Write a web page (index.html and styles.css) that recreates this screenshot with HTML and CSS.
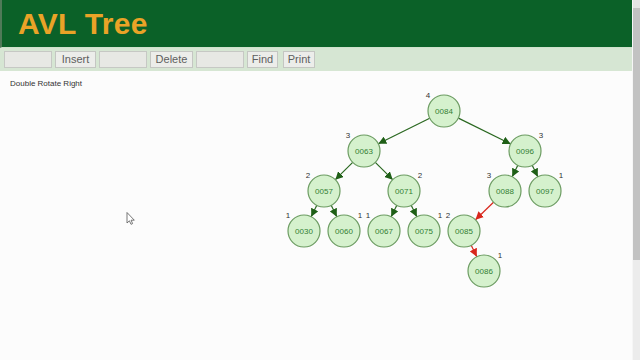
FILE: index.html
```html
<!DOCTYPE html>
<html>
<head>
<meta charset="utf-8">
<title>AVL Tree</title>
<link rel="stylesheet" href="styles.css">
</head>
<body>
<div class="window">
  <div class="page">
    <header class="title-bar"><h1 class="title">AVL Tree</h1></header>
    <div class="toolbar">
      <input class="field" type="text">
      <button class="btn btn-insert">Insert</button>
      <input class="field" type="text">
      <button class="btn btn-delete">Delete</button>
      <input class="field" type="text">
      <button class="btn btn-find">Find</button>
      <button class="btn btn-print">Print</button>
    </div>
    <div class="status">Double Rotate Right</div>
    <svg class="canvas" width="632" height="270" viewBox="0 90 632 270">
      <defs>
        <marker id="ag" markerUnits="userSpaceOnUse" markerWidth="9" markerHeight="8" refX="8" refY="4" orient="auto">
          <path d="M0,0 L8,4 L0,8 z" fill="#1f5f17"/>
        </marker>
        <marker id="ar" markerUnits="userSpaceOnUse" markerWidth="9" markerHeight="8" refX="8" refY="4" orient="auto">
          <path d="M0,0 L8,4 L0,8 z" fill="#d8261c"/>
        </marker>
      </defs>
      <g class="edges">
        <line x1="429.7" y1="118.2" x2="378.3" y2="143.8" marker-end="url(#ag)"/>
        <line x1="458.4" y1="118.1" x2="510.6" y2="143.9" marker-end="url(#ag)"/>
        <line x1="352.7" y1="162.3" x2="335.3" y2="179.7" marker-end="url(#ag)"/>
        <line x1="375.3" y1="162.3" x2="392.7" y2="179.7" marker-end="url(#ag)"/>
        <line x1="517.8" y1="165.3" x2="512.2" y2="176.7" marker-end="url(#ag)"/>
        <line x1="532.2" y1="165.3" x2="537.8" y2="176.7" marker-end="url(#ag)"/>
        <line x1="316.8" y1="205.3" x2="311.2" y2="216.7" marker-end="url(#ag)"/>
        <line x1="331.2" y1="205.3" x2="336.8" y2="216.7" marker-end="url(#ag)"/>
        <line x1="396.8" y1="205.3" x2="391.2" y2="216.7" marker-end="url(#ag)"/>
        <line x1="411.2" y1="205.3" x2="416.8" y2="216.7" marker-end="url(#ag)"/>
        <line class="red" x1="493.5" y1="202.2" x2="475.5" y2="219.8" marker-end="url(#ar)"/>
        <line class="red" x1="471.2" y1="245.3" x2="476.8" y2="256.7" marker-end="url(#ar)"/>
      </g>
      <g class="nodes">
        <circle cx="444" cy="111" r="16"/><text class="key" x="444" y="114">0084</text><text class="h" x="428" y="98">4</text>
        <circle cx="364" cy="151" r="16"/><text class="key" x="364" y="154">0063</text><text class="h" x="348" y="138">3</text>
        <circle cx="525" cy="151" r="16"/><text class="key" x="525" y="154">0096</text><text class="h" x="541" y="138">3</text>
        <circle cx="324" cy="191" r="16"/><text class="key" x="324" y="194">0057</text><text class="h" x="308" y="178">2</text>
        <circle cx="404" cy="191" r="16"/><text class="key" x="404" y="194">0071</text><text class="h" x="420" y="178">2</text>
        <circle cx="505" cy="191" r="16"/><text class="key" x="505" y="194">0088</text><text class="h" x="489" y="178">3</text>
        <circle cx="545" cy="191" r="16"/><text class="key" x="545" y="194">0097</text><text class="h" x="561" y="178">1</text>
        <circle cx="304" cy="231" r="16"/><text class="key" x="304" y="234">0030</text><text class="h" x="288" y="218">1</text>
        <circle cx="344" cy="231" r="16"/><text class="key" x="344" y="234">0060</text><text class="h" x="360" y="218">1</text>
        <circle cx="384" cy="231" r="16"/><text class="key" x="384" y="234">0067</text><text class="h" x="368" y="218">1</text>
        <circle cx="424" cy="231" r="16"/><text class="key" x="424" y="234">0075</text><text class="h" x="440" y="218">1</text>
        <circle cx="464" cy="231" r="16"/><text class="key" x="464" y="234">0085</text><text class="h" x="448" y="218">2</text>
        <circle cx="484" cy="271" r="16"/><text class="key" x="484" y="274">0086</text><text class="h" x="500" y="258">1</text>
      </g>
      <path class="cursor" d="M127,212.5 L127,223 L129.4,220.8 L131,224.3 L132.6,223.6 L131.1,220.2 L134.3,220.2 Z"/>
    </svg>
  </div>
  <div class="scrollbar">
    <div class="sb-arrow"></div>
    <div class="sb-thumb"></div>
  </div>
</div>
</body>
</html>
```
FILE: styles.css
```css
html, body {
  margin: 0;
  padding: 0;
}
body {
  background: #fcfcfc;
  font-family: "Liberation Sans", Arial, sans-serif;
}
.window {
  display: flex;
  width: 640px;
  height: 360px;
  overflow: hidden;
}
.page {
  width: 632px;
  display: flex;
  flex-direction: column;
  background: #fcfcfc;
}
.title-bar {
  height: 48px;
  background: #0b6128;
  border-left: 2px solid #4f7a58;
  box-sizing: border-box;
  border-bottom: 1px solid #cfe2cc;
}
.title {
  margin: 0;
  padding-left: 16px;
  font-size: 30px;
  letter-spacing: 0.3px;
  line-height: 47px;
  font-weight: bold;
  color: #eaa327;
}
.toolbar {
  height: 23px;
  box-sizing: border-box;
  background: #d6e6d3;
  display: flex;
  align-items: center;
  gap: 3px;
  padding: 0 4px;
}
.field {
  box-sizing: border-box;
  width: 48px;
  height: 17px;
  margin: 0;
  padding: 0;
  border: 1px solid #c6c8c4;
  background: #e7e8e4;
}
.btn {
  box-sizing: border-box;
  height: 17px;
  margin: 0;
  padding: 0;
  border: 1px solid #c4c6c2;
  background: #ecedea;
  color: #5e5e5e;
  font-family: "Liberation Sans", Arial, sans-serif;
  font-size: 11px;
  line-height: 15px;
  text-align: center;
}
.btn-insert { width: 41px; }
.btn-delete { width: 43px; }
.btn-find { width: 31px; }
.btn-print { width: 32px; margin-left: 2px; }
.status {
  padding: 8px 0 1px 10px;
  font-size: 8px;
  line-height: 10px;
  color: #333;
}
.canvas {
  display: block;
}
.edges line {
  stroke: #2a6820;
  stroke-width: 1.2;
}
.edges line.red {
  stroke: #d8261c;
}
.nodes circle {
  fill: #d5f1cd;
  stroke: #6c9c62;
  stroke-width: 1.2;
}
.key {
  font-family: "Liberation Sans", Arial, sans-serif;
  font-size: 8px;
  fill: #338033;
  text-anchor: middle;
}
.h {
  font-family: "Liberation Sans", Arial, sans-serif;
  font-size: 8px;
  fill: #333;
  text-anchor: middle;
}
.cursor {
  fill: #fff;
  stroke: #555;
  stroke-width: 0.8;
}
.scrollbar {
  width: 8px;
  background: #ececec;
  border-left: 1px solid #f6f6f6;
  box-sizing: border-box;
  display: flex;
  flex-direction: column;
}
.sb-arrow {
  height: 8px;
  background: #e4e4e4;
}
.sb-thumb {
  height: 252px;
  background: #c2c2c2;
}
```
